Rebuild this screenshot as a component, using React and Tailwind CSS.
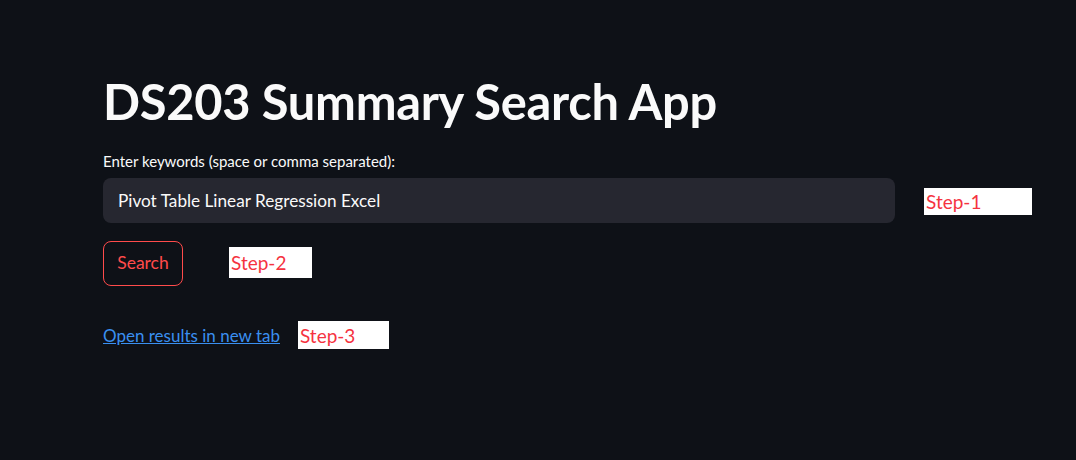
export default function App() {
  const stepBox = "bg-white text-[#f5333f] text-[19px] leading-none flex items-center pl-[2px]";
  return (
    <div className="min-h-[460px] w-full bg-[#0e1117] text-[#fafafa] font-['Lato',sans-serif]">
      <div className="pl-[103px] pt-[72px]">
        {/* Title */}
        <h1 className="text-[48.8px] font-bold leading-[58px] tracking-[-0.3px]">
          DS203 Summary Search App
        </h1>

        {/* Keyword input */}
        <p className="mt-[22px] text-[15px] leading-[18px]">Enter keywords (space or comma separated):</p>
        <div className="mt-[8px] flex items-center">
          <div className="w-[792px] h-[45px] rounded-[8px] bg-[#262730] flex items-center pl-[15px] text-[17.2px]">
            Pivot Table Linear Regression Excel
          </div>
          <div className={`${stepBox} ml-[29px] w-[108px] h-[27px] mt-[1px]`}>Step-1</div>
        </div>

        {/* Search button */}
        <div className="mt-[18px] flex items-center">
          <button className="w-[80px] h-[45px] rounded-[8px] border border-[#ff4b4b] text-[#ff4b4b] text-[17.5px]">
            Search
          </button>
          <div className={`${stepBox} ml-[46px] w-[83px] h-[31px] mt-[-3px]`}>Step-2</div>
        </div>

        {/* Results link */}
        <div className="mt-[35px] flex items-center">
          <a href="#" className="text-[#3a8ff0] underline text-[17px] mt-[2px]">
            Open results in new tab
          </a>
          <div className={`${stepBox} ml-[18px] w-[91px] h-[28px]`}>Step-3</div>
        </div>
      </div>
    </div>
  );
}
